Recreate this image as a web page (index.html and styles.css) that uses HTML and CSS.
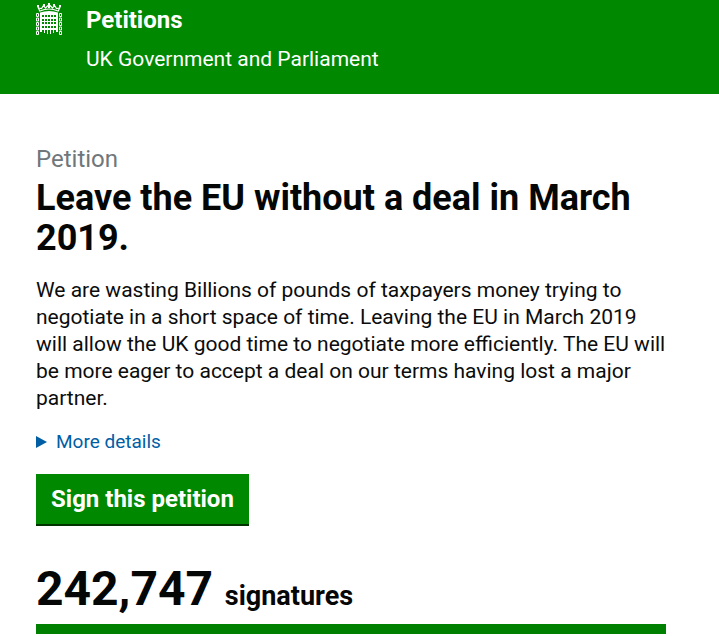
FILE: index.html
```
<!DOCTYPE html>
<html lang="en">
<head>
    <meta charset="UTF-8">
    <meta name="viewport" content="width=device-width, initial-scale=1.0">
    <title>Leave the EU without a deal in March 2019. - Petitions</title>
    <link rel="stylesheet" href="styles.css">
</head>
<body>
    <header class="site-header">
        <svg class="logo" viewBox="0 0 26 32" width="26" height="32" aria-hidden="true">
            <!-- crown -->
            <g fill="none" stroke="#fff" stroke-width="1.2">
                <path d="M4 8.500L1.500 3M22 8.500L24.500 3M4 8Q13 4 22 8"/>
                <path d="M2 5L5.500 5.500L7.500 2.500L9.500 5L13 1.500L16.500 5L18.500 2.500L20.500 5.500L24 5"/>
            </g>
            <path fill="#fff" d="M12 0h2v5h-2zM7 1h2v2H7zM17 1h2v2h-2zM1 2h2v2H1zM23 2h2v2h-2z"/>
            <!-- portcullis -->
            <path fill="#fff" d="M4 9.500Q13 6.500 22 9.500V12H4z"/>
            <path fill="#fff" d="M4 11h2v18H4zM8 11h1v19H8zM11 11h1v20h-1zM14 11h1v20h-1zM17 11h1v19h-1zM20 11h2v18h-2z"/>
            <path fill="#fff" d="M4 14h18v2H4zM4 18h18v1H4zM4 21h18v2H4zM4 25h18v2H4z"/>
            <!-- chains -->
            <g fill="none" stroke="#fff" stroke-width="1">
                <path d="M.5 10.500h2v3h-2zM.5 15h2v3h-2zM.5 19.500h2v3h-2zM.5 24h2v3h-2zM.5 28.500h2v3h-2z"/>
                <path d="M23.500 10.500h2v3h-2zM23.500 15h2v3h-2zM23.500 19.500h2v3h-2zM23.500 24h2v3h-2zM23.500 28.500h2v3h-2z"/>
            </g>
        </svg>
        <div class="site-name">
            <a class="site-title" href="#">Petitions</a>
            <span class="site-tagline">UK Government and Parliament</span>
        </div>
    </header>

    <main class="content">
        <h1 class="page-title">
            <span class="context">Petition</span>
            Leave the EU without a deal in March 2019.
        </h1>
        <p class="description">We are wasting Billions of pounds of taxpayers money trying to negotiate in a short space of time. Leaving the EU in March 2019 will allow the UK good time to negotiate more efficiently. The EU will be more eager to accept a deal on our terms having lost a major partner.</p>

        <details class="more-details">
            <summary>
                <svg class="arrow" viewBox="0 0 11 12" width="11" height="12" aria-hidden="true">
                    <path fill="#005ea5" d="M0 0l11 6-11 6z"/>
                </svg>
                More details
            </summary>
        </details>

        <button class="sign-button" type="button">Sign this petition</button>

        <section class="signatures">
            <p class="signature-count"><span class="count">242,747</span> signatures</p>
            <div class="progress-bar"></div>
        </section>
    </main>
</body>
</html>
```
FILE: styles.css
```
body {
    font-family: Roboto, Arial, sans-serif;
    background-color: #fff;
    color: #0b0c0c;
    margin: 0;
}

.site-header {
    display: flex;
    align-items: flex-start;
    gap: 24px;
    padding: 3px 36px 19px;
    background-color: #008800;
    color: #fff;
}

.site-name {
    display: flex;
    flex-direction: column;
    gap: 6px;
}

.site-title {
    color: #fff;
    font-size: 24px;
    font-weight: 700;
    line-height: 34px;
    text-decoration: none;
}

.site-tagline {
    font-size: 21px;
    line-height: 32px;
}

.content {
    padding: 50px 53px 0 36px;
}

.page-title {
    margin: 0 0 19px;
    color: #050606;
    font-size: 36px;
    font-weight: 700;
    line-height: 40px;
}

.context {
    display: block;
    margin-bottom: 4px;
    color: #6f777b;
    font-size: 24px;
    font-weight: 400;
    line-height: 30px;
}

.description {
    margin: 0 0 18px;
    font-size: 21px;
    line-height: 27px;
}

.more-details {
    margin-bottom: 20px;
    font-size: 19px;
    line-height: 24px;
}

.more-details summary {
    display: flex;
    align-items: center;
    gap: 9px;
    color: #005ea5;
    cursor: pointer;
}

.sign-button {
    padding: 10px 15px;
    border: none;
    border-bottom: 2px solid #003300;
    background-color: #008800;
    color: #fff;
    font-family: inherit;
    font-size: 24px;
    font-weight: 700;
    line-height: 30px;
    cursor: pointer;
}

.signatures {
    margin-top: 35px;
    padding-bottom: 2px;
}

.signature-count {
    margin: 0;
    color: #050606;
    font-size: 27px;
    font-weight: 700;
    line-height: 56px;
}

.count {
    margin-right: 5px;
    font-size: 48px;
}

.progress-bar {
    height: 10px;
    background-color: #008000;
}
```
